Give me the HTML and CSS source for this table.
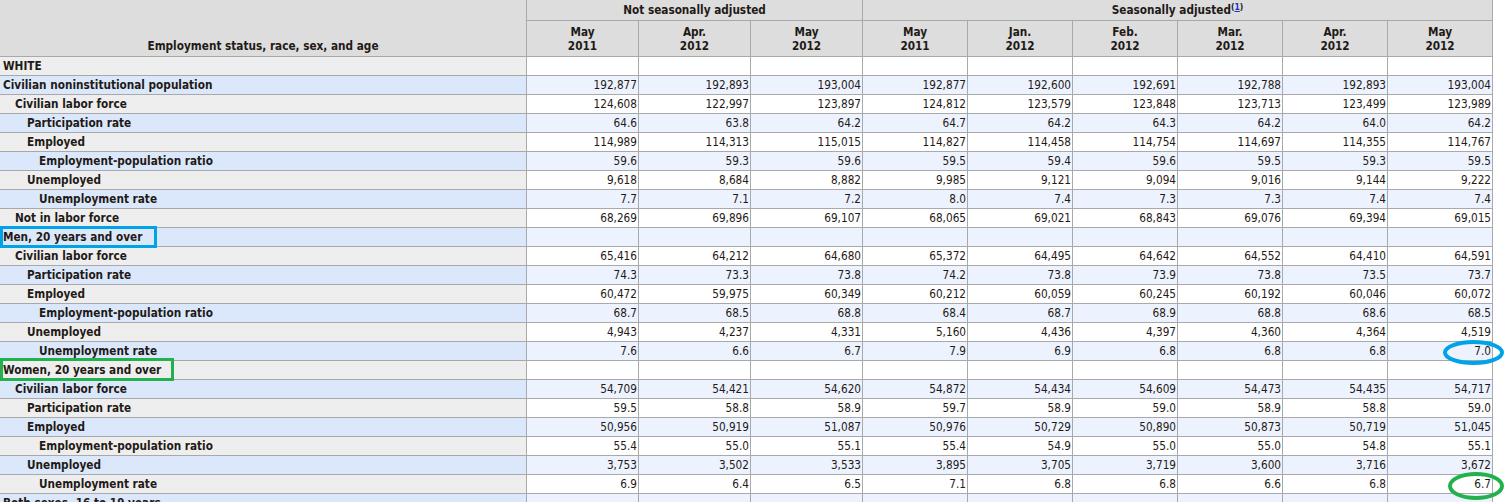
FILE: index.html
```html
<!DOCTYPE html>
<html lang="en">
<head>
<meta charset="utf-8">
<title>Employment status of the civilian population by race, sex, and age</title>
<link rel="stylesheet" href="styles.css">
</head>
<body>
<div class="page">
<table class="regular">
<colgroup>
<col class="c-stub">
<col class="c-nsa"><col class="c-nsa"><col class="c-nsa">
<col class="c-sa"><col class="c-sa"><col class="c-sa"><col class="c-sa"><col class="c-sa"><col class="c-sa">
</colgroup>
<thead>
<tr>
<th rowspan="2" class="h-stub">Employment status, race, sex, and age</th>
<th colspan="3" class="h-group">Not seasonally adjusted</th>
<th colspan="6" class="h-group">Seasonally adjusted<span class="fn">(<a href="#fn1">1</a>)</span></th>
</tr>
<tr>
<th class="h-date">May<br>2011</th>
<th class="h-date">Apr.<br>2012</th>
<th class="h-date">May<br>2012</th>
<th class="h-date">May<br>2011</th>
<th class="h-date">Jan.<br>2012</th>
<th class="h-date">Feb.<br>2012</th>
<th class="h-date">Mar.<br>2012</th>
<th class="h-date">Apr.<br>2012</th>
<th class="h-date">May<br>2012</th>
</tr>
</thead>
<tbody>
<tr><th class="stub l0">WHITE</th><td></td><td></td><td></td><td></td><td></td><td></td><td></td><td></td><td></td></tr>
<tr><th class="stub l0">Civilian noninstitutional population</th><td>192,877</td><td>192,893</td><td>193,004</td><td>192,877</td><td>192,600</td><td>192,691</td><td>192,788</td><td>192,893</td><td>193,004</td></tr>
<tr><th class="stub l1">Civilian labor force</th><td>124,608</td><td>122,997</td><td>123,897</td><td>124,812</td><td>123,579</td><td>123,848</td><td>123,713</td><td>123,499</td><td>123,989</td></tr>
<tr><th class="stub l2">Participation rate</th><td>64.6</td><td>63.8</td><td>64.2</td><td>64.7</td><td>64.2</td><td>64.3</td><td>64.2</td><td>64.0</td><td>64.2</td></tr>
<tr><th class="stub l2">Employed</th><td>114,989</td><td>114,313</td><td>115,015</td><td>114,827</td><td>114,458</td><td>114,754</td><td>114,697</td><td>114,355</td><td>114,767</td></tr>
<tr><th class="stub l3">Employment-population ratio</th><td>59.6</td><td>59.3</td><td>59.6</td><td>59.5</td><td>59.4</td><td>59.6</td><td>59.5</td><td>59.3</td><td>59.5</td></tr>
<tr><th class="stub l2">Unemployed</th><td>9,618</td><td>8,684</td><td>8,882</td><td>9,985</td><td>9,121</td><td>9,094</td><td>9,016</td><td>9,144</td><td>9,222</td></tr>
<tr><th class="stub l3">Unemployment rate</th><td>7.7</td><td>7.1</td><td>7.2</td><td>8.0</td><td>7.4</td><td>7.3</td><td>7.3</td><td>7.4</td><td>7.4</td></tr>
<tr><th class="stub l1">Not in labor force</th><td>68,269</td><td>69,896</td><td>69,107</td><td>68,065</td><td>69,021</td><td>68,843</td><td>69,076</td><td>69,394</td><td>69,015</td></tr>
<tr><th class="stub l0">Men, 20 years and over</th><td></td><td></td><td></td><td></td><td></td><td></td><td></td><td></td><td></td></tr>
<tr><th class="stub l1">Civilian labor force</th><td>65,416</td><td>64,212</td><td>64,680</td><td>65,372</td><td>64,495</td><td>64,642</td><td>64,552</td><td>64,410</td><td>64,591</td></tr>
<tr><th class="stub l2">Participation rate</th><td>74.3</td><td>73.3</td><td>73.8</td><td>74.2</td><td>73.8</td><td>73.9</td><td>73.8</td><td>73.5</td><td>73.7</td></tr>
<tr><th class="stub l2">Employed</th><td>60,472</td><td>59,975</td><td>60,349</td><td>60,212</td><td>60,059</td><td>60,245</td><td>60,192</td><td>60,046</td><td>60,072</td></tr>
<tr><th class="stub l3">Employment-population ratio</th><td>68.7</td><td>68.5</td><td>68.8</td><td>68.4</td><td>68.7</td><td>68.9</td><td>68.8</td><td>68.6</td><td>68.5</td></tr>
<tr><th class="stub l2">Unemployed</th><td>4,943</td><td>4,237</td><td>4,331</td><td>5,160</td><td>4,436</td><td>4,397</td><td>4,360</td><td>4,364</td><td>4,519</td></tr>
<tr><th class="stub l3">Unemployment rate</th><td>7.6</td><td>6.6</td><td>6.7</td><td>7.9</td><td>6.9</td><td>6.8</td><td>6.8</td><td>6.8</td><td>7.0</td></tr>
<tr><th class="stub l0">Women, 20 years and over</th><td></td><td></td><td></td><td></td><td></td><td></td><td></td><td></td><td></td></tr>
<tr><th class="stub l1">Civilian labor force</th><td>54,709</td><td>54,421</td><td>54,620</td><td>54,872</td><td>54,434</td><td>54,609</td><td>54,473</td><td>54,435</td><td>54,717</td></tr>
<tr><th class="stub l2">Participation rate</th><td>59.5</td><td>58.8</td><td>58.9</td><td>59.7</td><td>58.9</td><td>59.0</td><td>58.9</td><td>58.8</td><td>59.0</td></tr>
<tr><th class="stub l2">Employed</th><td>50,956</td><td>50,919</td><td>51,087</td><td>50,976</td><td>50,729</td><td>50,890</td><td>50,873</td><td>50,719</td><td>51,045</td></tr>
<tr><th class="stub l3">Employment-population ratio</th><td>55.4</td><td>55.0</td><td>55.1</td><td>55.4</td><td>54.9</td><td>55.0</td><td>55.0</td><td>54.8</td><td>55.1</td></tr>
<tr><th class="stub l2">Unemployed</th><td>3,753</td><td>3,502</td><td>3,533</td><td>3,895</td><td>3,705</td><td>3,719</td><td>3,600</td><td>3,716</td><td>3,672</td></tr>
<tr><th class="stub l3">Unemployment rate</th><td>6.9</td><td>6.4</td><td>6.5</td><td>7.1</td><td>6.8</td><td>6.8</td><td>6.6</td><td>6.8</td><td>6.7</td></tr>
<tr><th class="stub l0">Both sexes, 16 to 19 years</th><td></td><td></td><td></td><td></td><td></td><td></td><td></td><td></td><td></td></tr>
</tbody>
</table>

<svg class="marks" width="1508" height="502" viewBox="0 0 1508 502" aria-hidden="true">
<rect x="1.5" y="227.5" width="154" height="19" fill="none" stroke="#00a2e8" stroke-width="3"/>
<rect x="1.5" y="359.5" width="171" height="20" fill="none" stroke="#22b14c" stroke-width="3"/>
<ellipse cx="1473.5" cy="352.5" rx="28.5" ry="10.5" fill="none" stroke="#00a2e8" stroke-width="4"/>
<ellipse cx="1476" cy="486" rx="26" ry="12" fill="none" stroke="#22b14c" stroke-width="4"/>
</svg>
</div>
</body>
</html>
```

FILE: styles.css
```css
html, body {
  margin: 0;
  padding: 0;
  background: #ffffff;
}

.page {
  position: relative;
  width: 1508px;
  height: 502px;
  overflow: hidden;
}

.regular {
  border-collapse: collapse;
  table-layout: fixed;
  width: 1494px;
  margin: -1px 0 0 -1px;
  font-family: "DejaVu Sans Condensed", "DejaVu Sans", Verdana, sans-serif;
  font-stretch: condensed;
  font-size: 11.7px;
  color: #1f1a16;
}

.c-stub { width: 527px; }
.c-nsa { width: 112px; }
.c-sa { width: 105px; }

.regular th,
.regular td {
  border: 1px solid #a9a9a9;
  white-space: nowrap;
  overflow: hidden;
}

.regular thead th {
  background: #dddddd;
  font-weight: bold;
  text-align: center;
}

.regular .h-group {
  line-height: 20px;
  padding: 0 3px;
}

.regular .h-date {
  line-height: 14px;
  padding: 4px 3px 3px;
  vertical-align: bottom;
}

.regular .h-stub {
  line-height: 14px;
  padding: 0 3px 3px;
  vertical-align: bottom;
}

.fn {
  font-size: 8.5px;
  vertical-align: 4px;
  line-height: 0;
}

.fn a {
  color: #1532c8;
  text-decoration: underline;
}

.regular tbody th,
.regular tbody td {
  line-height: 18px;
  padding-top: 0;
  padding-bottom: 0;
}

.regular .stub {
  text-align: left;
  font-weight: bold;
  background: #eeeeee;
  padding-right: 3px;
}

.regular tbody td {
  text-align: right;
  padding-left: 2px;
  padding-right: 1px;
  background: #ffffff;
}

.regular tbody tr:nth-child(even) .stub {
  background: #dbe8fc;
}

.regular tbody tr:nth-child(even) td {
  background: #edf3fe;
}

.regular .l0 { padding-left: 3px; }
.regular .l1 { padding-left: 15px; }
.regular .l2 { padding-left: 27px; }
.regular .l3 { padding-left: 39px; }

.marks {
  position: absolute;
  left: 0;
  top: 0;
  pointer-events: none;
}
```
